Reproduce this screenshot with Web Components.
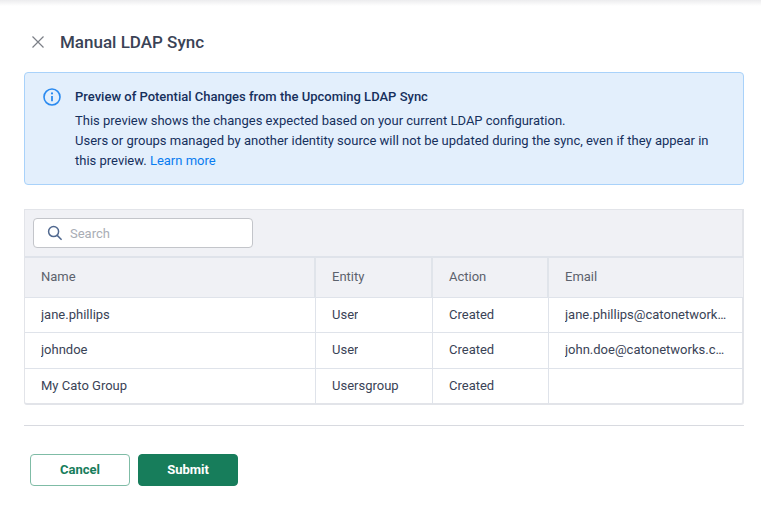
<!DOCTYPE html>
<html lang="en">
<head>
<meta charset="utf-8">
<title>Manual LDAP Sync</title>
<style>
    html, body { margin: 0; padding: 0; background: #fff; }
    body { font-family: Roboto, "Liberation Sans", sans-serif; }
</style>
</head>
<body>
<sync-page>
    <dialog-title slot="title">Manual LDAP Sync</dialog-title>
    <info-banner slot="banner" heading="Preview of Potential Changes from the Upcoming LDAP Sync">
        This preview shows the changes expected based on your current LDAP configuration.<br>
        Users or groups managed by another identity source will not be updated during the sync, even if they appear in this preview. <a>Learn more</a>
    </info-banner>
    <preview-table slot="table"></preview-table>
    <dialog-actions slot="actions"></dialog-actions>
</sync-page>

<script>
class SyncPage extends HTMLElement {
    constructor() {
        super();
        this.attachShadow({ mode: 'open' }).innerHTML = `
            <style>
                :host {
                    display: block;
                    height: 513px;
                    box-sizing: border-box;
                    padding: 0 17px 0 24px;
                    color: #3a4356;
                    overflow: hidden;
                    position: relative;
                }
                .shade {
                    position: absolute;
                    top: 0; left: 0; right: 0;
                    height: 6px;
                    background: linear-gradient(#ececee, #ffffff);
                }
                .banner { margin-top: 10px; display: block; }
                .table { margin-top: 24px; display: block; }
                hr { border: 0; border-top: 1px solid #d8dae0; margin: 20px 0 0; }
            </style>
            <div class="shade"></div>
            <slot name="title"></slot>
            <div class="banner"><slot name="banner"></slot></div>
            <div class="table"><slot name="table"></slot></div>
            <hr>
            <slot name="actions"></slot>
        `;
    }
}

class DialogTitle extends HTMLElement {
    constructor() {
        super();
        this.attachShadow({ mode: 'open' }).innerHTML = `
            <style>
                :host {
                    display: flex;
                    align-items: center;
                    gap: 16px;
                    box-sizing: border-box;
                    margin-top: 21px;
                    height: 41px;
                    padding-left: 8px;
                }
                svg { flex: none; margin-top: 1px; }
                h1 {
                    margin: 0;
                    font-size: 17px;
                    font-weight: 500;
                    color: #3a4356;
                }
            </style>
            <svg width="12" height="12" viewBox="0 0 12 12" fill="none" stroke="#7b7f87" stroke-width="1.2">
                <path d="M.5.5l11 11M11.5.5l-11 11"/>
            </svg>
            <h1><slot></slot></h1>
        `;
    }
}

class InfoBanner extends HTMLElement {
    constructor() {
        super();
        this.attachShadow({ mode: 'open' }).innerHTML = `
            <style>
                :host {
                    display: flex;
                    gap: 14px;
                    box-sizing: border-box;
                    height: 113px;
                    padding: 14px 30px 0 18px;
                    background: #e3effc;
                    border: 1px solid #a9d2fa;
                    border-radius: 4px;
                    color: #16305c;
                    font-size: 13px;
                    line-height: 20px;
                }
                svg { flex: none; margin-top: 1px; }
                .heading { font-weight: 500; margin-bottom: 4px; }
                ::slotted(a) { color: #0a7cf0; }
            </style>
            <svg width="18" height="18" viewBox="0 0 18 18" fill="none">
                <circle cx="9" cy="9" r="8" stroke="#2a8af0" stroke-width="1.6"/>
                <circle cx="9" cy="5.4" r="1.1" fill="#2a8af0"/>
                <path d="M9 8v5.2" stroke="#2a8af0" stroke-width="1.8"/>
            </svg>
            <div>
                <div class="heading"></div>
                <slot></slot>
            </div>
        `;
    }

    connectedCallback() {
        this.shadowRoot.querySelector('.heading').textContent = this.getAttribute('heading');
    }
}

class SearchBox extends HTMLElement {
    constructor() {
        super();
        this.attachShadow({ mode: 'open' }).innerHTML = `
            <style>
                :host {
                    display: flex;
                    align-items: center;
                    gap: 7px;
                    box-sizing: border-box;
                    width: 220px;
                    height: 30px;
                    padding-left: 13px;
                    background: #fff;
                    border: 1px solid #c3c5ca;
                    border-radius: 4px;
                    color: #a9adb5;
                    font-size: 13px;
                }
                svg { flex: none; }
            </style>
            <svg width="16" height="16" viewBox="0 0 16 16" fill="none" stroke="#50688f" stroke-width="1.5">
                <circle cx="6.6" cy="6.6" r="5"/>
                <path d="M10.2 10.4l4.4 4.4"/>
            </svg>
            <span>Search</span>
        `;
    }
}

class PreviewTable extends HTMLElement {
    constructor() {
        super();
        const rows = [
            ['jane.phillips', 'User', 'Created', 'jane.phillips@catonetworks.com'],
            ['johndoe', 'User', 'Created', 'john.doe@catonetworks.com'],
            ['My Cato Group', 'Usersgroup', 'Created', '']
        ];
        const head = ['Name', 'Entity', 'Action', 'Email']
            .map(label => `<div class="cell head">${label}</div>`).join('');
        const body = rows.map(row => row
            .map(value => `<div class="cell"><span>${value}</span></div>`).join('')).join('');
        this.attachShadow({ mode: 'open' }).innerHTML = `
            <style>
                :host {
                    display: block;
                    box-sizing: border-box;
                    height: 196px;
                    border: 1px solid #e2e4e9;
                    border-bottom-width: 2px;
                    border-right-width: 2px;
                    border-radius: 0 0 3px 3px;
                    font-size: 13px;
                    color: #3a4356;
                }
                .toolbar {
                    height: 46px;
                    box-sizing: border-box;
                    padding: 8px 8px 0;
                    background: #f0f1f5;
                }
                .grid {
                    display: grid;
                    grid-template-columns: 291px 117px 116px 194px;
                    grid-template-rows: 41px 35px 36px 36px;
                }
                .cell {
                    display: flex;
                    align-items: center;
                    box-sizing: border-box;
                    min-width: 0;
                    padding: 0 14px 2px 16px;
                    border-top: 1px solid #dfe3ea;
                    border-right: 1px solid #dfe3ea;
                }
                .cell:nth-child(4n) { border-right: 0; }
                .cell span {
                    overflow: hidden;
                    white-space: nowrap;
                    text-overflow: ellipsis;
                }
                .head {
                    background: #f0f1f5;
                    color: #5c626d;
                    border-top-width: 2px;
                    border-right-width: 2px;
                    border-right-color: #e0e4ea;
                }
            </style>
            <div class="toolbar"><search-box></search-box></div>
            <div class="grid">${head}${body}</div>
        `;
    }
}

class DialogActions extends HTMLElement {
    constructor() {
        super();
        this.attachShadow({ mode: 'open' }).innerHTML = `
            <style>
                :host {
                    display: flex;
                    gap: 8px;
                    margin-top: 28px;
                    padding-left: 6px;
                }
                button {
                    box-sizing: border-box;
                    width: 100px;
                    height: 32px;
                    padding-bottom: 2px;
                    border-radius: 4px;
                    font: 700 13px Roboto, "Liberation Sans", sans-serif;
                }
                .cancel { background: #fff; border: 1px solid #7fbca6; color: #177d5b; }
                .submit { background: #177d5b; border: 1px solid #177d5b; color: #fff; }
            </style>
            <button type="button" class="cancel">Cancel</button>
            <button type="button" class="submit">Submit</button>
        `;
    }
}

customElements.define('sync-page', SyncPage);
customElements.define('dialog-title', DialogTitle);
customElements.define('info-banner', InfoBanner);
customElements.define('search-box', SearchBox);
customElements.define('preview-table', PreviewTable);
customElements.define('dialog-actions', DialogActions);
</script>
</body>
</html>
